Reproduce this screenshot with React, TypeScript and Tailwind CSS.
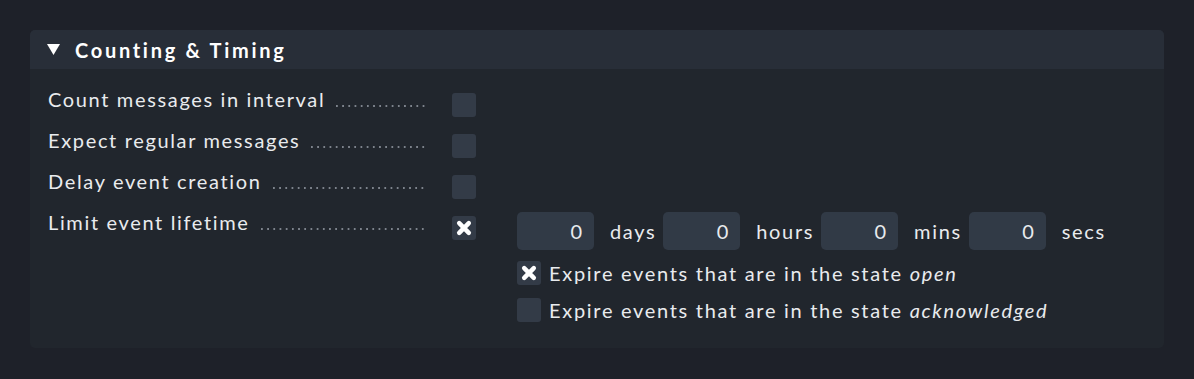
import React from "react";

/** Checkmk-style "Counting & Timing" form section */

function CheckBox({ checked = false }: { checked?: boolean }) {
  return (
    <span className="flex h-[24px] w-[24px] flex-none items-center justify-center rounded-[3px] bg-[#333b47]">
      {checked && (
        <svg width="24" height="24" viewBox="0 0 24 24" aria-hidden="true">
          <path
            d="M7.2 7.2 L16.8 16.8 M16.8 7.2 L7.2 16.8"
            stroke="#ffffff"
            strokeWidth="4.5"
            strokeLinecap="round"
            fill="none"
          />
        </svg>
      )}
    </span>
  );
}

function Label({ text }: { text: string }) {
  return (
    <div className="flex h-[24px] w-[378px] flex-none items-end">
      <span className="whitespace-nowrap pr-[11px] text-[20px] leading-[24px] tracking-[1.65px] text-[#e9ebee]">
        {text}
      </span>
      <span className="mb-[4px] h-[2px] flex-1 bg-[linear-gradient(to_right,#7d838c_1.5px,transparent_1.5px)] bg-[length:6.2px_2px] bg-repeat-x" />
    </div>
  );
}

function TimeField({ unit, last = false }: { unit: string; last?: boolean }) {
  return (
    <div className="flex items-center">
      <div className="flex h-[38px] w-[77px] items-center justify-end rounded-[5px] bg-[#313a46] pr-[12px] text-[20px] text-[#e9ebee]">
        0
      </div>
      <span
        className={
          last
            ? "ml-[16px] text-[20px] tracking-[1.65px] text-[#e9ebee]"
            : "ml-[16px] mr-[7px] text-[20px] tracking-[1.65px] text-[#e9ebee]"
        }
      >
        {unit}
      </span>
    </div>
  );
}

export default function App() {
  return (
    <div className="min-h-screen bg-[#1e2129] p-[30px] font-['Lato',sans-serif]">
      <div className="h-[318px] overflow-hidden rounded-[5px] bg-[#21262d]">
        {/* Header */}
        <div className="flex h-[39px] items-center bg-[#282e38] pl-[17px]">
          <svg width="13" height="11" viewBox="0 0 13 11" aria-hidden="true">
            <path d="M0 0 H13 L6.5 11 Z" fill="#ffffff" />
          </svg>
          <span className="ml-[15px] text-[20px] font-bold tracking-[2.7px] text-white">
            Counting &amp; Timing
          </span>
        </div>

        {/* Rows */}
        <div className="flex flex-col gap-[11px] px-[18px] pt-[18px]">
          <div className="flex items-start">
            <Label text="Count messages in interval" />
            <div className="ml-[26px] mt-[6px]">
              <CheckBox />
            </div>
          </div>
          <div className="flex items-start">
            <Label text="Expect regular messages" />
            <div className="ml-[26px] mt-[6px]">
              <CheckBox />
            </div>
          </div>
          <div className="flex items-start">
            <Label text="Delay event creation" />
            <div className="ml-[26px] mt-[6px]">
              <CheckBox />
            </div>
          </div>
          <div className="flex items-start">
            <Label text="Limit event lifetime" />
            <div className="ml-[26px] mt-[6px]">
              <CheckBox checked />
            </div>
            <div className="ml-[41px] mt-[2px] flex flex-col">
              <div className="flex items-center">
                <TimeField unit="days" />
                <TimeField unit="hours" />
                <TimeField unit="mins" />
                <TimeField unit="secs" last />
              </div>
              <div className="mt-[11px] flex items-start gap-[8px]">
                <CheckBox checked />
                <span className="text-[20px] leading-[24px] tracking-[1.7px] text-[#e9ebee]">
                  Expire events that are in the state <i>open</i>
                </span>
              </div>
              <div className="mt-[13px] flex items-start gap-[8px]">
                <CheckBox />
                <span className="text-[20px] leading-[24px] tracking-[1.7px] text-[#e9ebee]">
                  Expire events that are in the state <i>acknowledged</i>
                </span>
              </div>
            </div>
          </div>
        </div>
      </div>
    </div>
  );
}
